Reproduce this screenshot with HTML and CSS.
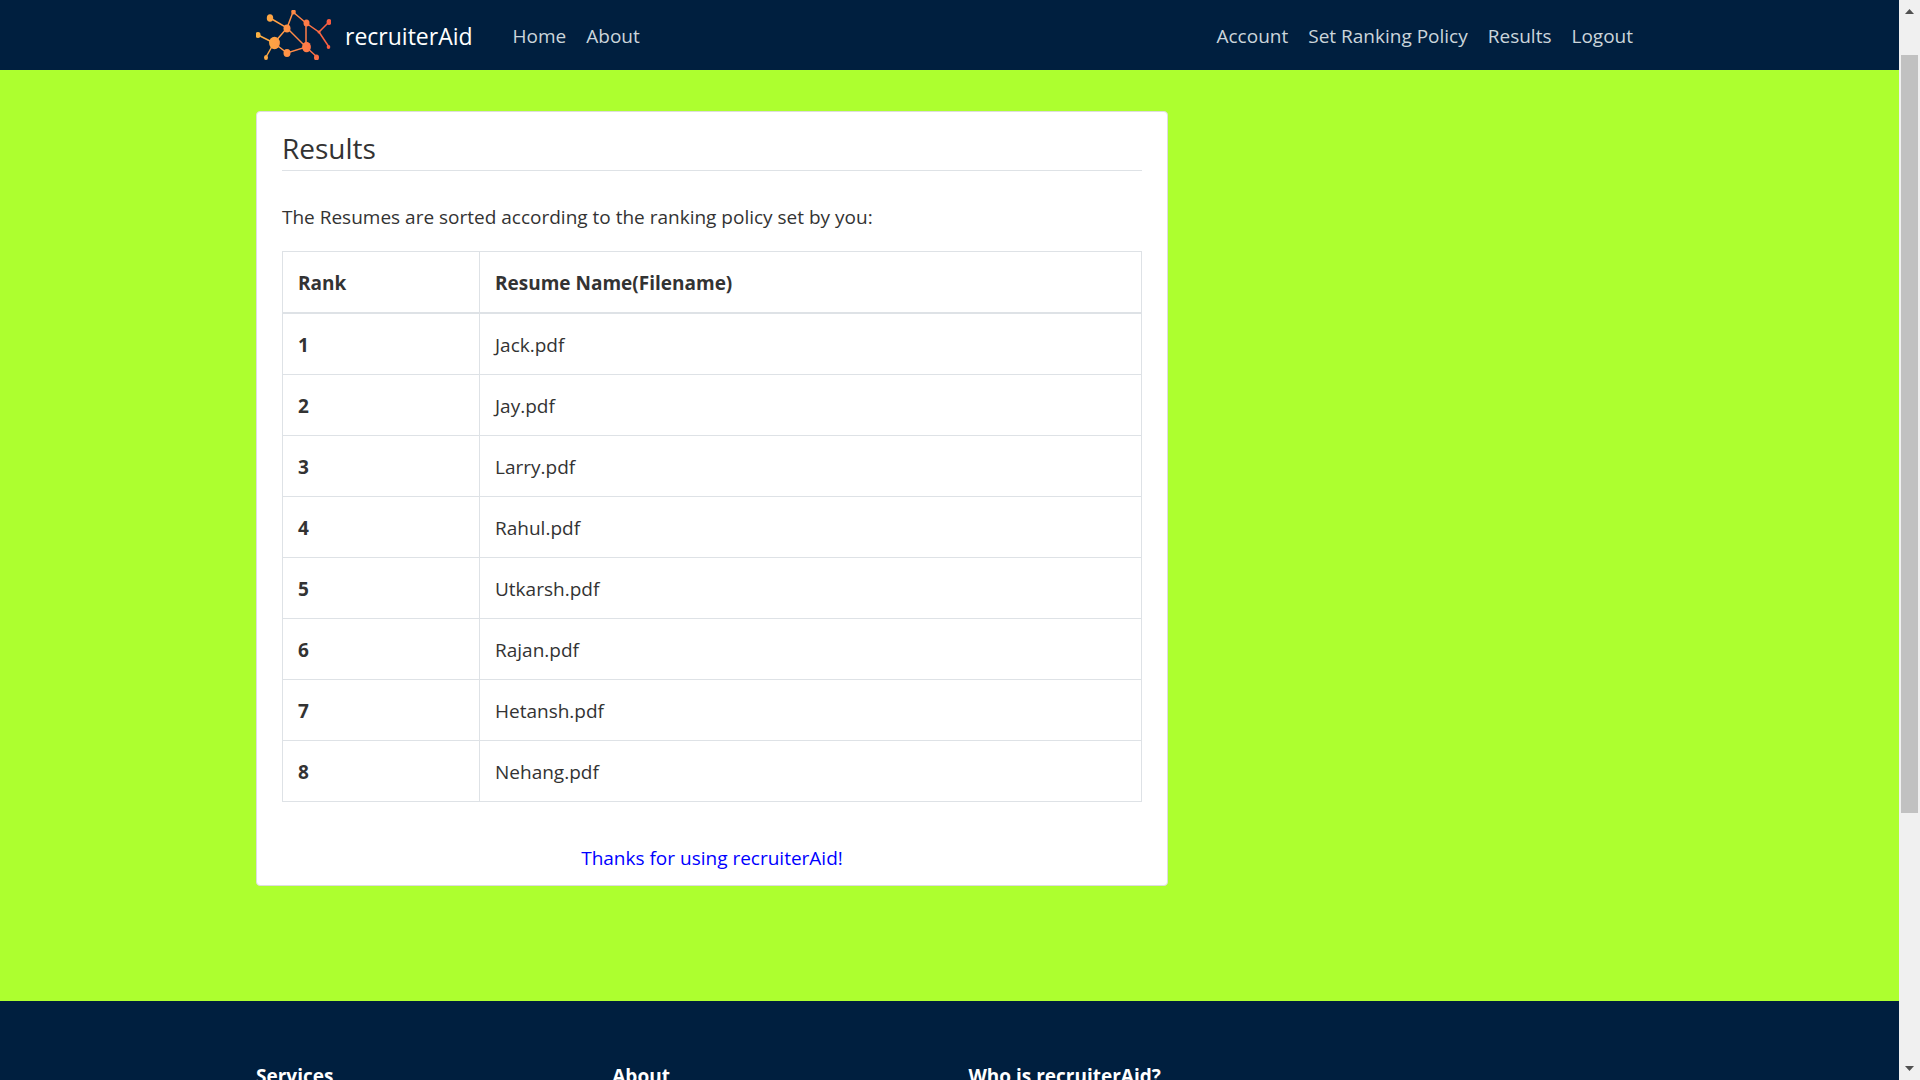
FILE: index.html
```
<!DOCTYPE html>
<html lang="en">
<head>
<meta charset="utf-8">
<meta name="viewport" content="width=device-width, initial-scale=1">
<title>recruiterAid - Results</title>
<link rel="stylesheet" href="styles.css">
</head>
<body>
<div class="page">
  <header class="site-header">
    <nav class="container navbar">
      <a class="brand" href="#">
        <svg class="brand-logo" viewBox="0 0 75 50" aria-hidden="true">
          <defs>
            <linearGradient id="warm" gradientUnits="userSpaceOnUse" x1="0" y1="0" x2="75" y2="0">
              <stop offset="0" stop-color="#fab343"/>
              <stop offset="0.3" stop-color="#ff9d45"/>
              <stop offset="0.7" stop-color="#ff7847"/>
              <stop offset="1" stop-color="#f9593f"/>
            </linearGradient>
          </defs>
          <g fill="none" stroke="url(#warm)" stroke-width="1.5">
            <path d="M14 8 31 18 37 2 50 13 63 22 73 12M63 22 73 37M50 13V37L31 18 18 33 2 25M18 33 10 47M18 33 31 43 50 37 61 47"/>
          </g>
          <g fill="url(#warm)">
            <ellipse cx="14" cy="8" rx="3.2" ry="3.8"/>
            <ellipse cx="2" cy="25" rx="2.6" ry="3"/>
            <ellipse cx="18.500" cy="33" rx="5.400" ry="6.200"/>
            <ellipse cx="10" cy="47.500" rx="2" ry="2.500"/>
            <ellipse cx="31" cy="18.500" rx="3.500" ry="4"/>
            <ellipse cx="31" cy="43" rx="3.500" ry="4"/>
            <ellipse cx="37.500" cy="2" rx="2.300" ry="2.500"/>
            <ellipse cx="50.500" cy="13" rx="3" ry="3.500"/>
            <ellipse cx="50.500" cy="37" rx="4.400" ry="5.200"/>
            <ellipse cx="60.500" cy="47.500" rx="2.500" ry="3"/>
            <ellipse cx="73" cy="12" rx="2.400" ry="3"/>
            <ellipse cx="72.500" cy="37" rx="1.800" ry="2"/>
            <circle cx="63" cy="22" r="1.500"/>
          </g>
        </svg>
        <span>recruiterAid</span>
      </a>
      <div class="nav-links">
        <a href="#">Home</a>
        <a href="#">About</a>
      </div>
      <div class="nav-links nav-user">
        <a href="#">Account</a>
        <a href="#">Set Ranking Policy</a>
        <a href="#">Results</a>
        <a href="#">Logout</a>
      </div>
    </nav>
  </header>
  <main class="container content">
    <section class="card">
      <h1 class="card-title">Results</h1>
      <p class="intro">The Resumes are sorted according to the ranking policy set by you:</p>
      <table class="results">
        <thead>
          <tr><th class="rank" scope="col">Rank</th><th scope="col">Resume Name(Filename)</th></tr>
        </thead>
        <tbody>
          <tr><th scope="row">1</th><td>Jack.pdf</td></tr>
          <tr><th scope="row">2</th><td>Jay.pdf</td></tr>
          <tr><th scope="row">3</th><td>Larry.pdf</td></tr>
          <tr><th scope="row">4</th><td>Rahul.pdf</td></tr>
          <tr><th scope="row">5</th><td>Utkarsh.pdf</td></tr>
          <tr><th scope="row">6</th><td>Rajan.pdf</td></tr>
          <tr><th scope="row">7</th><td>Hetansh.pdf</td></tr>
          <tr><th scope="row">8</th><td>Nehang.pdf</td></tr>
        </tbody>
      </table>
      <p class="thanks">Thanks for using recruiterAid!</p>
    </section>
  </main>
  <footer class="site-footer">
    <div class="container footer-columns">
      <h2>Services</h2>
      <h2>About</h2>
      <h2 class="wide">Who is recruiterAid?</h2>
    </div>
  </footer>
</div>
<div class="scrollbar" aria-hidden="true">
  <svg class="arrow" viewBox="0 0 9 5"><path d="M0 5 4.500 0 9 5z"/></svg>
  <div class="track"><div class="thumb"></div></div>
  <svg class="arrow" viewBox="0 0 9 5"><path d="M0 0 4.500 5 9 0z"/></svg>
</div>
</body>
</html>
```
FILE: styles.css
```
* {
  box-sizing: border-box;
}

body {
  margin: 0;
  height: 100vh;
  display: flex;
  overflow: hidden;
  background: #adff2f;
  color: #333;
  font-family: "Segoe UI", "Open Sans", "Noto Sans", sans-serif;
  font-size: 19px;
  line-height: 30px;
}

h1, h2, p {
  margin: 0;
}

a {
  color: inherit;
  text-decoration: none;
}

.page {
  flex: 1;
  min-width: 0;
  overflow: hidden;
}

.container {
  max-width: 1425px;
  margin: 0 auto;
  padding: 0 19px;
}

.site-header,
.site-footer {
  background: #001f3f;
}

.navbar {
  display: flex;
  align-items: center;
  min-height: 70px;
}

.brand {
  display: flex;
  align-items: center;
  gap: 14px;
  margin-right: 40px;
  color: #fff;
  font-size: 23px;
  line-height: 38px;
}

.brand span {
  padding-top: 2px;
}

.brand-logo {
  width: 75px;
  height: 50px;
}

.nav-links {
  display: flex;
  gap: 20px;
  padding-top: 2px;
  color: #cbd5db;
}

.nav-user {
  margin-left: auto;
  padding-right: 10px;
}

.content {
  padding-top: 41px;
  padding-bottom: 115px;
}

/* Eight of twelve columns, with a 38px gutter */
.card {
  width: calc((100% + 38px) * 2 / 3 - 38px);
  padding: 12px 25px;
  background: #fff;
  border: 1px solid #ddd;
  border-radius: 4px;
}

.card-title {
  margin-bottom: 31px;
  padding-top: 2px;
  border-bottom: 1px solid #dee2e6;
  font-size: 28px;
  font-weight: 400;
  line-height: 44px;
}

.intro {
  margin-bottom: 19px;
}

.results {
  width: 100%;
  margin-bottom: 41px;
  border-collapse: collapse;
  table-layout: fixed;
}

.results th,
.results td {
  padding: 16px 15px 14px;
  border: 1px solid #dee2e6;
  text-align: left;
}

.results thead th {
  border-bottom-width: 2px;
}

.results .rank {
  width: 197px;
}

.thanks {
  color: #00f;
  text-align: center;
}

.site-footer {
  padding: 60px 0;
}

.footer-columns {
  display: grid;
  grid-template-columns: repeat(4, 1fr);
  column-gap: 38px;
  color: #fff;
}

.footer-columns h2 {
  font-size: 19px;
  line-height: 30px;
}

.footer-columns .wide {
  grid-column: span 2;
}

.scrollbar {
  width: 21px;
  padding: 9px 2px;
  display: flex;
  flex-direction: column;
  align-items: center;
  background: #f0f0f0;
}

.arrow {
  width: 9px;
  height: 5px;
  fill: #505050;
}

.track {
  flex: 1;
  width: 100%;
  padding-top: 41px;
}

.thumb {
  height: 75%;
  background: #c1c1c1;
}
```
